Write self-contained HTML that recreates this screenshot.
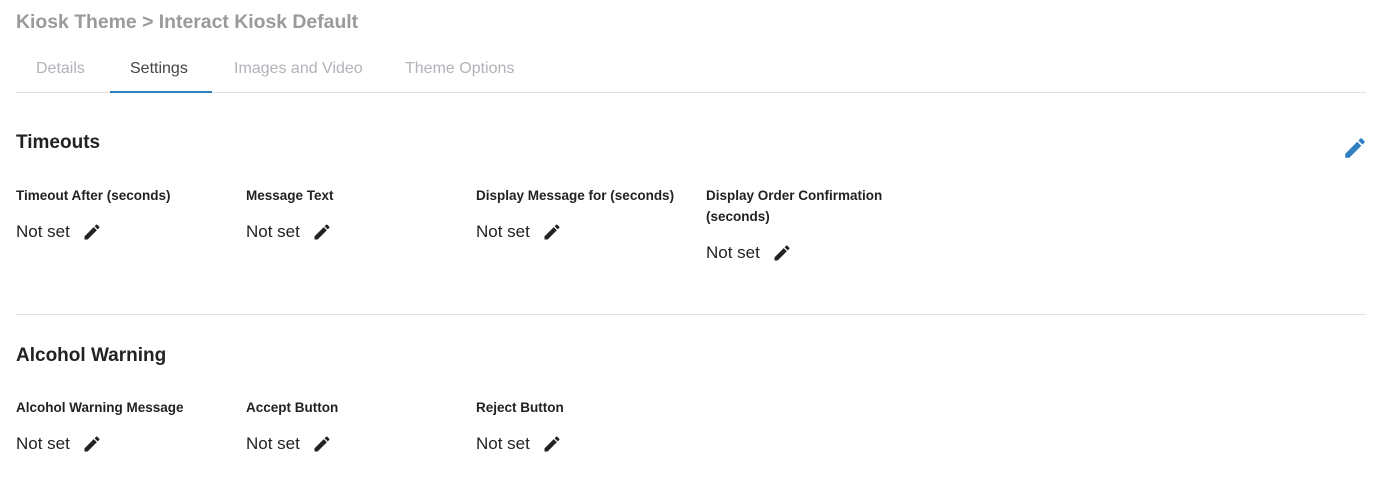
<!DOCTYPE html>
<html><head><style>
body{margin:0;width:1377px;height:489px;background:#fff;font-family:"Liberation Sans",sans-serif;position:relative;overflow:hidden}
.a{position:absolute;white-space:nowrap}
.title{left:16px;top:11px;font-size:19.4px;font-weight:bold;color:#9a9a9a}
.tab{top:60px;font-size:16px;color:#b0b3b8}
.h{font-size:19px;font-weight:bold;color:#222;left:16px}
.lbl{font-size:13.5px;font-weight:bold;color:#222}
.val{font-size:17px;color:#222}
.val svg{position:absolute;top:0px}
</style></head><body>
<div class="a title">Kiosk Theme &gt; Interact Kiosk Default</div>
<div class="a tab" style="left:36px">Details</div>
<div class="a tab" style="left:130px;color:#444">Settings</div>
<div class="a tab" style="left:234px">Images and Video</div>
<div class="a tab" style="left:405px">Theme Options</div>
<div class="a" style="left:16px;top:92px;width:1350px;height:1px;background:#e0e0e0"></div>
<div class="a" style="left:110px;top:91px;width:102px;height:2px;background:#2f7fc1"></div>

<div class="a h" style="top:132px">Timeouts</div>
<svg class="a" style="left:1342px;top:135px" width="26" height="26" viewBox="0 0 24 24"><path fill="#2f7fc1" d="M3 17.25V21h3.75L17.81 9.94l-3.75-3.75L3 17.25zM20.71 7.04a1 1 0 000-1.41l-2.34-2.34a1 1 0 00-1.41 0l-1.83 1.83 3.75 3.75 1.83-1.83z"/></svg>

<div class="a lbl" style="left:16px;top:188px">Timeout After (seconds)</div>
<div class="a lbl" style="left:246px;top:188px">Message Text</div>
<div class="a lbl" style="left:476px;top:188px">Display Message for (seconds)</div>
<div class="a lbl" style="left:706px;line-height:21px;top:185px">Display Order Confirmation<br>(seconds)</div>

<div class="a lbl" style="left:16px;top:400px">Alcohol Warning Message</div>
<div class="a lbl" style="left:246px;top:400px">Accept Button</div>
<div class="a lbl" style="left:476px;top:400px">Reject Button</div>

<div class="a" style="left:16px;top:314px;width:1350px;height:1px;background:#e0e0e0"></div>
<div class="a h" style="top:345px">Alcohol Warning</div>

<div id="vals"></div>
<script>
var pos=[[16,222],[246,222],[476,222],[706,243],[16,434],[246,434],[476,434]];
var s='';
pos.forEach(function(p){s+='<div class="a val" style="left:'+p[0]+'px;top:'+p[1]+'px;width:100px;height:20px">Not set<svg style="left:66px" width="20" height="20" viewBox="0 0 24 24"><path fill="#222" d="M3 17.25V21h3.75L17.81 9.94l-3.75-3.75L3 17.25zM20.71 7.04a1 1 0 000-1.41l-2.34-2.34a1 1 0 00-1.41 0l-1.83 1.83 3.75 3.75 1.83-1.83z"/></svg></div>';});
document.getElementById('vals').innerHTML=s;
</script>
</body></html>
